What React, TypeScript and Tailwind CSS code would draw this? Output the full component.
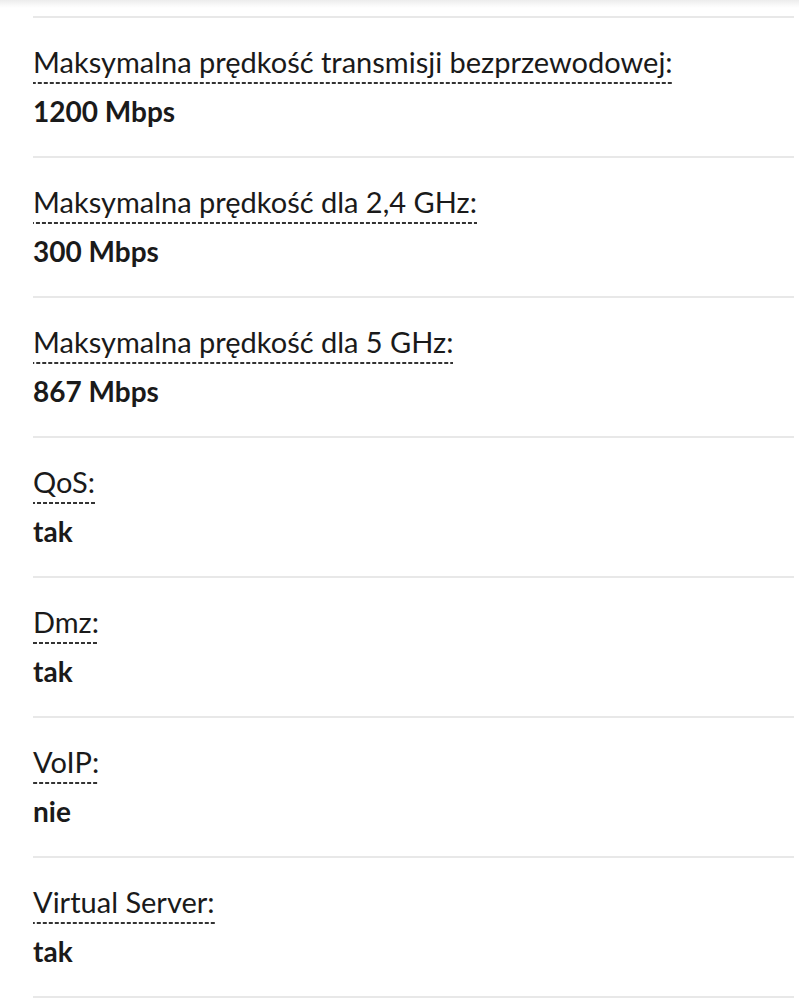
import React from "react";

const rows: [string, string][] = [
  ["Maksymalna prędkość transmisji bezprzewodowej:", "1200 Mbps"],
  ["Maksymalna prędkość dla 2,4 GHz:", "300 Mbps"],
  ["Maksymalna prędkość dla 5 GHz:", "867 Mbps"],
  ["QoS:", "tak"],
  ["Dmz:", "tak"],
  ["VoIP:", "nie"],
  ["Virtual Server:", "tak"],
];

export default function App() {
  return (
    <div className="min-h-[1000px] bg-white font-['Lato',sans-serif] text-[#1a1a1a]">
      <div className="h-[8px] bg-[linear-gradient(to_bottom,#ececec,#fafafa_70%,#ffffff)]" />
      <div className="pl-[33px] pr-[5px] pt-[8px]">
        {rows.map(([label, value]) => (
          <div key={label} className="border-t-2 border-[#e8e8e8] h-[140px] pt-[26px]">
            <div className="leading-[36px]">
              <span className="text-[29px] pb-[5px] bg-[linear-gradient(to_right,#333_4px,transparent_4px)] bg-[length:6px_2px] bg-repeat-x bg-bottom">
                {label}
              </span>
            </div>
            <div className="text-[28px] font-bold leading-[36px] mt-[8px]">{value}</div>
          </div>
        ))}
        <div className="border-t-2 border-[#e8e8e8]" />
      </div>
    </div>
  );
}
